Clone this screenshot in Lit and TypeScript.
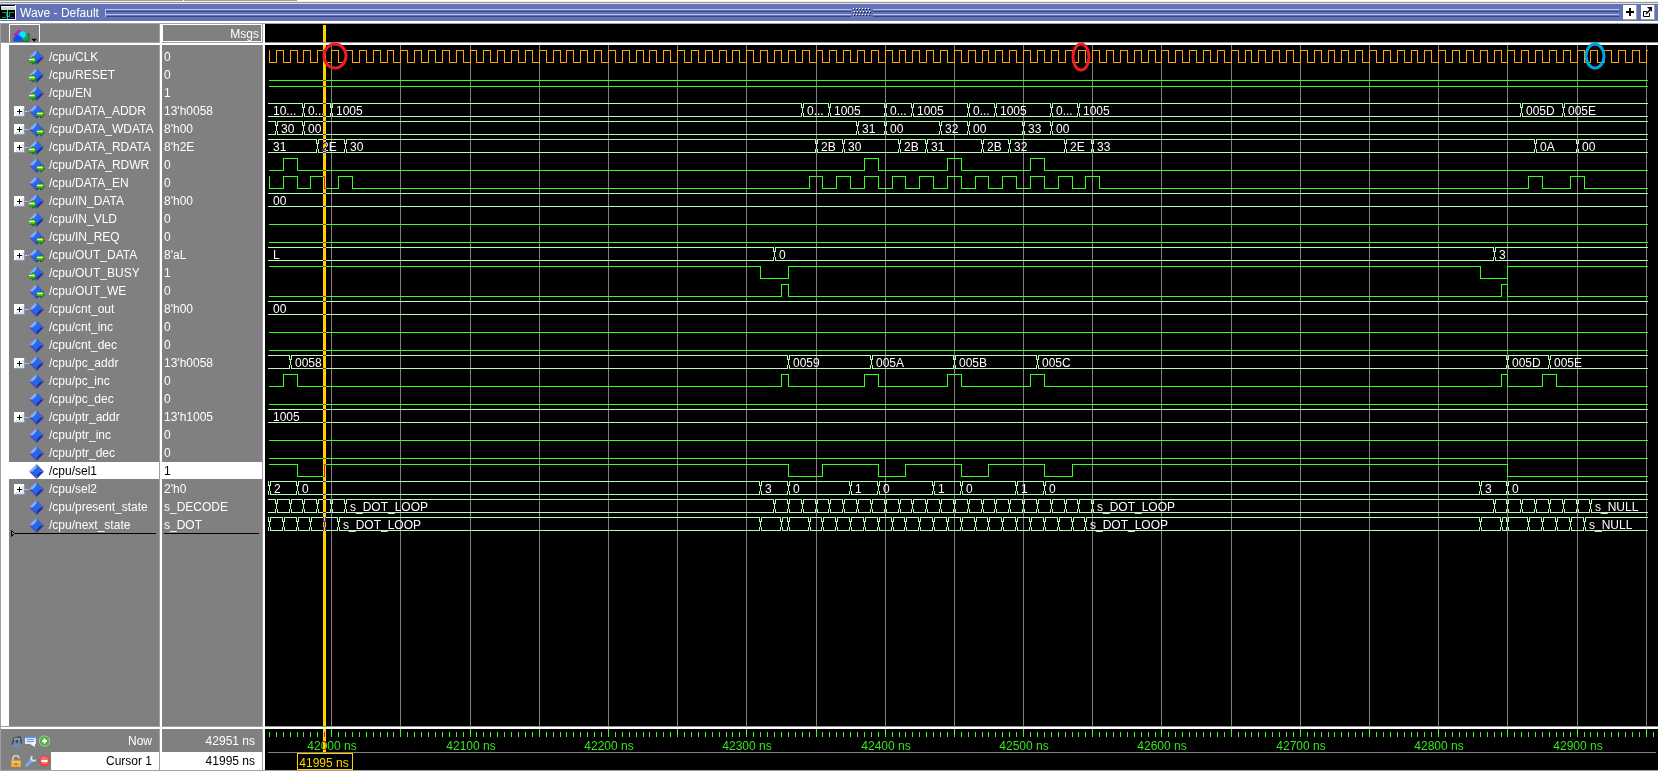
import { LitElement, html, svg, css, nothing } from "lit";
import { customElement, property, state } from "lit/decorators.js";
import { classMap } from "lit/directives/class-map.js";

type Port = "in" | "out" | "none";
type Change = [number, string];

interface Signal {
  name: string;
  value: string;
  port: Port;
  selected?: boolean;
  clock?: boolean;
  /** Single-bit signals: level at the left edge and the times at which it toggles. */
  level?: 0 | 1;
  toggles?: number[];
  /** Vector signals: text at the left edge and the later changes. */
  bus?: boolean;
  expandable?: boolean;
  initial?: string;
  changes?: Change[];
}

const START = 41955;
const SPAN = 996.5;
const NOW = 42951;
const CURSOR = 41995;
const ROW = 18;

const range = (from: number, to: number, step: number): number[] => {
  const out: number[] = [];
  for (let t = from; t <= to; t += step) out.push(t);
  return out;
};
const blanks = (times: number[]): Change[] => times.map((t) => [t, ""]);
const pulses = (starts: number[], length = 10): number[] =>
  starts.flatMap((t) => [t, t + length]);

const bit = (name: string, port: Port, level: 0 | 1 = 0, toggles: number[] = [], extra: Partial<Signal> = {}): Signal => ({
  name, port, level, toggles, value: String(level), ...extra,
});
const bus = (name: string, port: Port, value: string, initial: string, changes: Change[] = [], extra: Partial<Signal> = {}): Signal => ({
  name, port, value, initial, changes, bus: true, expandable: true, ...extra,
});

const SIGNALS: Signal[] = [
  bit("/cpu/CLK", "in", 1, range(START, 42950, 5), { value: "0", clock: true }),
  bit("/cpu/RESET", "in"),
  bit("/cpu/EN", "in", 1),
  bus("/cpu/DATA_ADDR", "out", "13'h0058", "10...", [
    [41980, "0..."], [42000, "1005"], [42340, "0..."], [42360, "1005"], [42400, "0..."], [42420, "1005"],
    [42460, "0..."], [42480, "1005"], [42520, "0..."], [42540, "1005"], [42860, "005D"], [42890, "005E"],
  ]),
  bus("/cpu/DATA_WDATA", "out", "8'h00", "", [
    [41960, "30"], [41980, "00"], [42380, "31"], [42400, "00"], [42440, "32"], [42460, "00"], [42500, "33"], [42520, "00"],
  ]),
  bus("/cpu/DATA_RDATA", "in", "8'h2E", "31", [
    [41990, "2E"], [42010, "30"], [42350, "2B"], [42370, "30"], [42410, "2B"], [42430, "31"],
    [42470, "2B"], [42490, "32"], [42530, "2E"], [42550, "33"], [42870, "0A"], [42900, "00"],
  ]),
  bit("/cpu/DATA_RDWR", "out", 0, pulses([41965, 42385, 42445, 42505])),
  bit("/cpu/DATA_EN", "out", 1, [
    START,
    ...pulses([41965, 41985, 42005, ...range(42345, 42545, 20), 42865, 42895]),
  ], { value: "0" }),
  bus("/cpu/IN_DATA", "in", "8'h00", "00"),
  bit("/cpu/IN_VLD", "in"),
  bit("/cpu/IN_REQ", "out"),
  bus("/cpu/OUT_DATA", "out", "8'aL", "L", [[42320, "0"], [42840, "3"]]),
  bit("/cpu/OUT_BUSY", "in", 1, [42310, 42330, 42830, 42850]),
  bit("/cpu/OUT_WE", "out", 0, pulses([42325, 42845], 5)),
  bus("/cpu/cnt_out", "none", "8'h00", "00"),
  bit("/cpu/cnt_inc", "none"),
  bit("/cpu/cnt_dec", "none"),
  bus("/cpu/pc_addr", "none", "13'h0058", "", [
    [41970, "0058"], [42330, "0059"], [42390, "005A"], [42450, "005B"], [42510, "005C"], [42850, "005D"], [42880, "005E"],
  ]),
  bit("/cpu/pc_inc", "none", 0, [
    41965, 41975, 42325, 42330, ...pulses([42385, 42445, 42505]), 42845, 42850, 42875, 42885,
  ]),
  bit("/cpu/pc_dec", "none"),
  bus("/cpu/ptr_addr", "none", "13'h1005", "1005"),
  bit("/cpu/ptr_inc", "none"),
  bit("/cpu/ptr_dec", "none"),
  bit("/cpu/sel1", "none", 1, [
    41975, 41995, 42330, 42355, 42395, 42415, 42455, 42475, 42515, 42535, 42850,
  ], { selected: true }),
  bus("/cpu/sel2", "none", "2'h0", "", [
    [START, "2"], [41975, "0"], [42310, "3"], [42330, "0"], [42375, "1"], [42395, "0"], [42435, "1"],
    [42455, "0"], [42495, "1"], [42515, "0"], [42830, "3"], [42850, "0"],
  ]),
  bus("/cpu/present_state", "none", "s_DECODE", "", [
    ...blanks(range(41960, 42000, 10)), [42010, "s_DOT_LOOP"],
    ...blanks(range(42320, 42540, 10)), [42550, "s_DOT_LOOP"],
    ...blanks(range(42840, 42900, 10)), [42910, "s_NULL"],
  ], { expandable: false }),
  bus("/cpu/next_state", "none", "s_DOT", "", [
    ...blanks([START, 41965, 41975, 41985, 41995]), [42005, "s_DOT_LOOP"],
    ...blanks([42310, 42325, 42330, ...range(42345, 42535, 10)]), [42545, "s_DOT_LOOP"],
    ...blanks([42830, 42845, 42850, ...range(42865, 42895, 10)]), [42905, "s_NULL"],
  ], { expandable: false }),
];

@customElement("signal-icon")
export class SignalIcon extends LitElement {
  @property() port: Port = "none";

  static styles = css`
    :host { display: block; width: 16px; height: 16px; }
    svg { display: block; }
  `;

  private arrow() {
    if (this.port === "none") return nothing;
    const dx = this.port === "in" ? 0 : 8;
    return svg`<g transform="translate(${dx} -1)">
      <path d="M0 9.500h3.500V7l4.500 4.500-4.500 4.500v-2.500H0z" fill="#0a6a08"/>
      <path d="M0 9.500h4V8.200l3 3H0z" fill="#d8ff30"/>
      <path d="M0 11h7l-2.800 3v-1.300H0z" fill="#45d424"/>
      <path d="M1 10h3v1H1z" fill="#fbffd0"/>
    </g>`;
  }

  render() {
    return html`<svg width="16" height="16" viewBox="0 0 16 16" aria-hidden="true">
      <path d="M7.500 0 0 7.500h7.500z" fill="#86b0f8"/>
      <path d="M7.500 0 15 7.500H7.500z" fill="#3c62c8"/>
      <path d="M0 7.500 7.500 15V7.500z" fill="#4058c0"/>
      <path d="M15 7.500 7.500 15V7.500z" fill="#2b2f9c"/>
      <path d="M7.500 3.500 11.500 7.500 7.500 11.500 3.500 7.500z" fill="#1f69fa"/>
      ${this.arrow()}
    </svg>`;
  }
}

@customElement("wave-view")
export class WaveView extends LitElement {
  @state() private w = 1393;
  @state() private h = 746;
  private observer?: ResizeObserver;

  static styles = css`
    :host { display: block; min-width: 0; min-height: 0; overflow: hidden; background: #000; }
    svg { display: block; font: 12px "Liberation Sans", Arial, sans-serif; }
    .crisp { shape-rendering: crispEdges; fill: none; stroke-width: 1; }
    .grid { stroke: #808080; }
    .clock { stroke: #ffa500; }
    .bit { stroke: #35ff1c; }
    .bus { stroke: #b4ffb4; }
    .value { fill: #fff; }
    .tick { stroke: #35ff1c; }
    .time { fill: #35e81c; text-anchor: middle; }
    .cursor { fill: #ffd200; shape-rendering: crispEdges; mix-blend-mode: difference; }
    .cursor-box { fill: #000; stroke: #ffd200; shape-rendering: crispEdges; }
    .cursor-time { fill: #ffd200; text-anchor: middle; }
    .sash { fill: #fff; shape-rendering: crispEdges; }
    .sash-edge { fill: #909090; shape-rendering: crispEdges; }
    .mark { fill: none; stroke-width: 3; }
    .red { stroke: #ed1c24; }
    .blue { stroke: #00a2e8; }
  `;

  connectedCallback() {
    super.connectedCallback();
    this.observer = new ResizeObserver(() => this.measure());
    this.observer.observe(this);
  }

  disconnectedCallback() {
    this.observer?.disconnect();
    super.disconnectedCallback();
  }

  private measure() {
    if (this.clientWidth > 0) this.w = this.clientWidth;
    if (this.clientHeight > 0) this.h = this.clientHeight;
  }

  /** Horizontal pixel of a time, for the whole recorded range to fill the pane. */
  private x(t: number) {
    return Math.round(3.9 + ((t - START) * (this.w - 14)) / SPAN);
  }

  private bitTrace(s: Signal, i: number) {
    const hi = 26.5 + ROW * i;
    const lo = 38.5 + ROW * i;
    let level = s.level ?? 0;
    let d = `M4 ${level ? hi : lo}`;
    for (const t of s.toggles ?? []) {
      level = level ? 0 : 1;
      d += `H${this.x(t) + 0.5}V${level ? hi : lo}`;
    }
    return svg`<path class="crisp ${s.clock ? "clock" : "bit"}" d=${d + `H${this.w - 10}`}></path>`;
  }

  private busTrace(s: Signal, i: number) {
    const top = 25.5 + ROW * i;
    const bottom = 38.5 + ROW * i;
    let d = "";
    let from = 3;
    for (const [t] of s.changes ?? []) {
      const x = this.x(t);
      d += `M${from} ${top}H${x}M${from} ${bottom}H${x}`;
      d += `M${x - 0.5} ${top}v4M${x + 1.5} ${top}v4M${x + 0.5} ${top + 3.5}V${bottom - 3.5}`;
      d += `M${x - 0.5} ${bottom}v-4M${x + 1.5} ${bottom}v-4`;
      from = x + 1;
    }
    d += `M${from} ${top}H${this.w - 10}M${from} ${bottom}H${this.w - 10}`;
    const y = 37 + ROW * i;
    return svg`
      <path class="crisp bus" d=${d}></path>
      ${s.initial ? svg`<text class="value" x="8" y=${y}>${s.initial}</text>` : nothing}
      ${(s.changes ?? []).filter((c) => c[1]).map(([t, v]) => svg`<text class="value" x=${this.x(t) + 5} y=${y}>${v}</text>`)}
    `;
  }

  render() {
    const { w, h } = this;
    const majors = range(42000, 42950, 50);
    const minors = range(41955, 42955, 5).filter((t) => t % 50 !== 0);
    const cx = this.x(CURSOR);
    return html`<svg width=${w} height=${h} role="img" aria-label="Waveforms">
      <path class="crisp grid" d=${majors.map((t) => `M${this.x(t) + 0.5} 21V${h - 44}`).join("")}></path>
      ${SIGNALS.map((s, i) => (s.bus ? this.busTrace(s, i) : this.bitTrace(s, i)))}
      <path class="crisp tick" d=${
        majors.map((t) => `M${this.x(t) + 0.5} ${h - 41}v8`).join("") +
        minors.map((t) => `M${this.x(t) + 0.5} ${h - 38}v5`).join("")
      }></path>
      ${range(42000, 42900, 100).map((t) => svg`<text class="time" x=${this.x(t) + 1} y=${h - 20}>${t} ns</text>`)}
      <path class="crisp grid" d="M3 ${h - 17.5}H${w - 2}"></path>
      <rect class="cursor" x=${cx - 1} y="1" width="3" height=${h - 19}></rect>
      <rect class="sash-edge" x="0" y="18" width=${w} height="1"></rect>
      <rect class="sash" x="0" y="19" width=${w} height="2"></rect>
      <rect class="sash-edge" x="0" y=${h - 44} width=${w} height="1"></rect>
      <rect class="sash" x="0" y=${h - 43} width=${w} height="2"></rect>
      <rect class="cursor-box" x=${cx - 26.5} y=${h - 16.5} width="55" height="16"></rect>
      <text class="cursor-time" x=${cx} y=${h - 3}>${CURSOR} ns</text>
      <ellipse class="mark red" cx=${this.x(42003)} cy="32" rx="11" ry="12"></ellipse>
      <ellipse class="mark red" cx=${this.x(42542)} cy="33" rx="8" ry="13"></ellipse>
      <ellipse class="mark blue" cx=${this.x(42913)} cy="32" rx="9" ry="12"></ellipse>
    </svg>`;
  }
}

@customElement("app-root")
export class AppRoot extends LitElement {
  static styles = css`
    :host {
      display: flex; flex-direction: column; height: 100vh; box-sizing: border-box;
      border-bottom: 1px solid #a0a0a0; overflow: hidden;
      font: 12px/18px "Liberation Sans", Arial, sans-serif; color: #fff; background: #808080;
    }
    button { margin: 0; padding: 0; border: 0; background: none; font: inherit; color: inherit; display: block; }
    svg { display: block; }
    ul { list-style: none; margin: 0; padding: 0; }

    .tabs { display: flex; gap: 1px; height: 1px; background: #fff; }
    .tab { background: #a0a0a0; width: 183px; }
    .tab.narrow { width: 113px; }
    .strip { height: 1px; background: #f0f0f0; border-bottom: 1px solid #989898; }
    .title-bar {
      display: flex; align-items: center; height: 19px; background: #6373b5;
      border-bottom: 1px solid #fff; border-top: 1px solid #e0e0e8; box-sizing: border-box;
      padding-right: 3px;
    }
    .title-bar, .strip, .tabs { flex: none; }
    .edge { height: 2px; background: #fff; flex: none; box-sizing: border-box; border-bottom: 1px solid #a0a0a0; }
    .caption { margin: 0 6px 0 4px; font-weight: normal; font-size: 12px; line-height: 18px; }
    .rule { flex: 1; height: 8px; box-sizing: border-box; background: linear-gradient(#b5c3ff 0 1px, #6373b5 1px 2px, #39457b 2px 3px, #6373b5 3px 5px, #b5c3ff 5px 6px, #6373b5 6px 7px, #39457b 7px 8px); }
    .rule.first { border-left: 1px solid #b5c3ff; }
    .grip { margin: 0 1px; }
    .window-button {
      width: 14px; height: 15px; margin-left: 4px; background: #fff; box-sizing: border-box;
      border-right: 1px solid #a0a0a0; border-bottom: 1px solid #a0a0a0;
    }

    .panes { flex: 1; min-height: 0; display: grid; grid-template-columns: 162px 103px 1fr; }
    .pane { display: flex; flex-direction: column; min-width: 0; min-height: 0; box-sizing: border-box; border-right: 2px solid #fff; box-shadow: inset -1px 0 #a0a0a0; }
    .names { border-left: 1px solid #a0a0a0; }
    .head { height: 18px; flex: none; display: flex; }
    .names .head { padding-left: 8px; }
    .messages .head { box-sizing: border-box; border: 1px solid #fff; justify-content: flex-end; padding-right: 2px; margin-right: 1px; }
    .sash { flex: none; height: 3px; box-sizing: border-box; background: #fff; border-top: 1px solid #a0a0a0; }
    .filter { display: flex; width: 31px; height: 18px; box-sizing: border-box; border: 1px solid #fff; border-bottom: 0; padding: 3px 0 0 3px; }
    .body { flex: 1; min-height: 0; overflow: hidden; box-sizing: border-box; padding-top: 3px; margin-right: 1px; }
    .names .body { border-left: 8px solid #fff; }
    .row { height: 18px; box-sizing: border-box; padding-top: 2px; border-bottom: 1px solid transparent; background-clip: padding-box; display: flex; align-items: center; white-space: nowrap; line-height: 17px; }
    .names .row { padding-left: 5px; }
    .messages .row { padding-left: 2px; }
    .selected { background-color: #fff; color: #000; }
    .branch { width: 15px; height: 17px; display: flex; align-items: center; }
    .branch.open::after { content: ""; flex: 1; border-top: 1px dotted #d8d8d8; }
    .expand { width: 11px; height: 11px; }
    signal-icon { margin-right: 4px; }
    .insert { display: flex; align-items: center; height: 7px; margin: -4px 3px 0 2px; }
    .insert::after { content: ""; flex: 1; height: 1px; background: #000; }

    .foot { flex: none; height: 41px; margin-right: 1px; }
    .now { height: 23px; box-sizing: border-box; display: flex; align-items: center; line-height: 22px; }
    .cursor-row { height: 18px; display: flex; align-items: center; }
    .label { flex: 1; text-align: right; padding-right: 7px; }
    .cursor-row .label { background: #fff; color: #000; height: 18px; box-sizing: border-box; padding-top: 1px; line-height: 17px; }
    .tools { display: flex; gap: 3px; width: 50px; box-sizing: border-box; padding-left: 10px; }
    .tools button { width: 11px; height: 12px; }
  `;

  private icons() {
    return {
      find: svg`<path d="M1 10 3 3h2l1 5M6 8l1-6h2l2 7" stroke="#3a4b66" stroke-width="1.500" fill="none"/><path d="M1 10.500h9" stroke="#6a8fe0" stroke-width="2"/><path d="M3 4h6" stroke="#c8d4e8"/>`,
      sheet: svg`<path d="M0 1h11v8H0z" fill="#dbe8fb"/><path d="M0 1h11v2H0z" fill="#5a8ee0"/><path d="M2 4.500h7M2 6.500h7" stroke="#8097bd"/><path d="m5 9 5-2v5z" fill="#f4f8ff"/>`,
      add: svg`<circle cx="5.500" cy="6" r="5.500" fill="#b4d8ac"/><circle cx="5.500" cy="6" r="4.800" fill="#4fb246"/><path d="M3 6h5M5.500 3.500v5" stroke="#fff" stroke-width="2"/>`,
      lock: svg`<path d="M2 6V3.500a3 3 0 0 1 6 0" stroke="#e6d3a8" stroke-width="1.500" fill="none"/><path d="M0 5.500h10V12H0z" fill="#f0a832"/><path d="M1 6.500h8v1H1z" fill="#ffdc80"/><path d="M4.500 8h1v2h-1z" fill="#7a4a08"/>`,
      wrench: svg`<path d="M1.500 10.500 7 5" stroke="#7ea6ea" stroke-width="3" stroke-linecap="round"/><path d="M7 1 6 4l2 2 3-1" stroke="#cfdffc" stroke-width="1.800" fill="none"/>`,
      remove: svg`<circle cx="5.500" cy="6" r="5.500" fill="#e0443c"/><circle cx="5.500" cy="5.500" r="4" fill="#f07268"/><path d="M2.500 6h6" stroke="#fff" stroke-width="2"/>`,
    };
  }

  private tool(label: string, art: unknown) {
    return html`<button aria-label=${label}><svg width="11" height="12" viewBox="0 0 11 12">${art}</svg></button>`;
  }

  private titleBar() {
    const dots: unknown[] = [];
    for (let r = 0; r < 3; r++) {
      for (let c = 0; c < 6; c++) {
        const x = (r % 2) + c * 3 + 1;
        dots.push(svg`<path d="M${x} ${r * 3}h1v1h-1z" fill="#fff"/><path d="M${x + 1} ${r * 3 + 1}h1v1h-1z" fill="#101830"/>`);
      }
    }
    return html`
      <div class="tabs"><span class="tab"></span><span class="tab narrow"></span></div>
      <div class="strip"></div>
      <header class="title-bar">
        <svg width="16" height="15" viewBox="0 0 16 15" shape-rendering="crispEdges" aria-hidden="true">
          <path d="M0 0h16v15H0z" fill="#000"/><path d="M1 1h14v4H1z" fill="#d8d8d0"/><path d="M1 1h14v1H1z" fill="#fff"/>
          <path d="M2 7.500h4v4h3v-4h5" stroke="#00a048" fill="none"/><path d="M2 12.500h4" stroke="#00a048"/>
          <path d="M7.500 5v10" stroke="#00e0e8"/><path d="M9 12.500h5" stroke="#2028d0"/><path d="M15.500 0v15M0 14.500h16" stroke="#fff"/>
        </svg>
        <h1 class="caption">Wave - Default</h1>
        <span class="rule first"></span>
        <svg class="grip" width="20" height="9" viewBox="0 0 20 9" shape-rendering="crispEdges" aria-hidden="true">${dots}</svg>
        <span class="rule"></span>
        <button class="window-button" aria-label="Zoom pane">
          <svg width="13" height="14" viewBox="0 0 13 14"><path d="M3 7h8M7 3v8" stroke="#000" stroke-width="2"/></svg>
        </button>
        <button class="window-button" aria-label="Undock pane">
          <svg width="13" height="14" viewBox="0 0 13 14"><path d="M6 6.500H2.500v5h6V8" stroke="#000" fill="none"/><path d="M6 2h5v5z" fill="#000"/><path d="m5 9 4-4" stroke="#000" stroke-width="1.500"/></svg>
        </button>
      </header>
      <div class="edge"></div>
    `;
  }

  private nameRow(s: Signal) {
    return html`<li class=${classMap({ row: true, selected: !!s.selected })}>
      <span class=${classMap({ branch: true, open: !!s.expandable })}>
        ${s.expandable
          ? html`<button class="expand" aria-label="Expand ${s.name}">
              <svg width="11" height="11" viewBox="0 0 11 11" shape-rendering="crispEdges">
                <path d="M0 0h11v11H0z" fill="#8c98b0"/><path d="M0 0h10v10H0z" fill="#fff"/><path d="M2 8h8v2H2zM8 2h2v8H8z" fill="#dde2ee"/>
                <path d="M3 5.500h5M5.500 3v5" stroke="#000"/>
              </svg>
            </button>`
          : nothing}
      </span>
      <signal-icon .port=${s.port}></signal-icon>
      <span>${s.name}</span>
    </li>`;
  }

  render() {
    const i = this.icons();
    return html`
      ${this.titleBar()}
      <main class="panes">
        <section class="pane names" aria-label="Signals">
          <div class="head">
            <button class="filter" aria-label="Filter signals">
              <svg width="27" height="14" viewBox="0 0 27 14" aria-hidden="true">
                <path d="M8 5h8v8H8z" fill="#18a058"/><path d="M8 13.500h8.500V5" stroke="#0a6030" fill="none"/>
                <path d="M0 7 6 1l6 5-3 2-3-3-3 3z" fill="#c01cc8"/>
                <circle cx="10" cy="6.500" r="3.500" fill="#10e0ff"/>
                <path d="m0 11 4-5 5 3 1 4-3 1H1z" fill="#1050e8"/>
                <path d="M19 11h6l-3 3z" fill="#000"/>
              </svg>
            </button>
          </div>
          <div class="sash"></div>
          <div class="body">
            <ul>${SIGNALS.map((s) => this.nameRow(s))}</ul>
            <div class="insert"><svg width="4" height="7" viewBox="0 0 4 7"><path d="M.5.5 3.500 3.500.5 6.500z" fill="none" stroke="#000"/></svg></div>
          </div>
          <div class="sash"></div>
          <div class="foot">
            <div class="now">
              <div class="tools">${this.tool("Find", i.find)}${this.tool("Sheet", i.sheet)}${this.tool("Add cursor", i.add)}</div>
              <span class="label">Now</span>
            </div>
            <div class="cursor-row">
              <div class="tools">${this.tool("Lock cursor", i.lock)}${this.tool("Edit cursor", i.wrench)}${this.tool("Remove cursor", i.remove)}</div>
              <span class="label">Cursor 1</span>
            </div>
          </div>
        </section>
        <section class="pane messages" aria-label="Values">
          <div class="head">Msgs</div>
          <div class="sash"></div>
          <div class="body">
            <ul>${SIGNALS.map((s) => html`<li class=${classMap({ row: true, selected: !!s.selected })}>${s.value}</li>`)}</ul>
            <div class="insert"></div>
          </div>
          <div class="sash"></div>
          <div class="foot">
            <div class="now"><span class="label">${NOW} ns</span></div>
            <div class="cursor-row"><span class="label">${CURSOR} ns</span></div>
          </div>
        </section>
        <wave-view></wave-view>
      </main>
    `;
  }
}
